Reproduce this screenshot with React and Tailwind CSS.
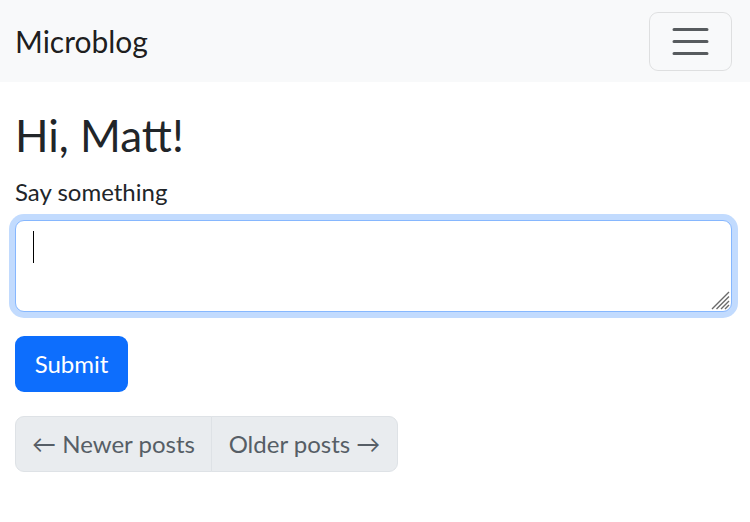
function NavbarToggler() {
  return (
    <button
      type="button"
      aria-label="Toggle navigation"
      className="flex h-[59px] w-[83px] items-center justify-center rounded-[9px] border border-black/10"
    >
      <svg width="45" height="45" viewBox="0 0 30 30" aria-hidden="true">
        <path
          d="M4 7h22M4 15h22M4 23h22"
          stroke="rgba(33,37,41,0.75)"
          strokeWidth="2"
          strokeLinecap="round"
          fill="none"
        />
      </svg>
    </button>
  );
}

function ResizeGrip() {
  return (
    <svg
      width="20"
      height="20"
      viewBox="0 0 20 20"
      className="pointer-events-none absolute bottom-[2px] right-[2px]"
      aria-hidden="true"
    >
      <path
        d="M19 2L2 19M19 6.5L6.5 19M19 11L11 19M19 15L15 19"
        stroke="#6b6b6b"
        strokeWidth="1.4"
        fill="none"
      />
    </svg>
  );
}

export default function App() {
  return (
    <div className="min-h-[522px] bg-white text-[#212529]" style={{ fontFamily: "Lato, 'Noto Sans', sans-serif" }}>
      <nav className="flex h-[82px] items-center justify-between bg-[#f8f9fa] pl-[15px] pr-[18px]">
        <a href="#" className="text-[30px] leading-[45px] text-black/90">
          Microblog
        </a>
        <NavbarToggler />
      </nav>

      <main className="pl-[15px] pr-[18px] pt-[27px]">
        <h1 className="mb-[12px] text-[44px] leading-[1.2] font-normal">Hi, Matt!</h1>

        <form className="flex flex-col">
          <label htmlFor="post" className="mb-[10px] text-[24px] leading-[36px]">
            Say something
          </label>
          <div className="relative">
            <textarea
              id="post"
              className="block h-[92px] w-full resize-none rounded-[9px] border-[1.5px] border-[#86b7fe] bg-white px-[18px] py-[9px] text-[24px] leading-[36px] shadow-[0_0_0_6px_rgba(13,110,253,0.25)] outline-none"
            />
            <span className="pointer-events-none absolute left-[18px] top-[11px] h-[32px] w-px bg-black" />
            <ResizeGrip />
          </div>
          <div className="mt-[24px]">
            <button
              type="button"
              className="h-[56px] w-[113px] rounded-[9px] bg-[#0d6efd] text-[24px] text-white"
            >
              Submit
            </button>
          </div>
        </form>

        <nav className="mt-[24px] flex">
          <ul className="flex h-[56px] text-[24px] text-[#565e66]">
            <li className="flex w-[197px] items-center justify-center rounded-l-[9px] border border-[#dee2e6] bg-[#e9ecef]">
              ← Newer posts
            </li>
            <li className="-ml-px flex w-[187px] items-center justify-center rounded-r-[9px] border border-[#dee2e6] bg-[#e9ecef]">
              Older posts →
            </li>
          </ul>
        </nav>
      </main>
    </div>
  );
}
